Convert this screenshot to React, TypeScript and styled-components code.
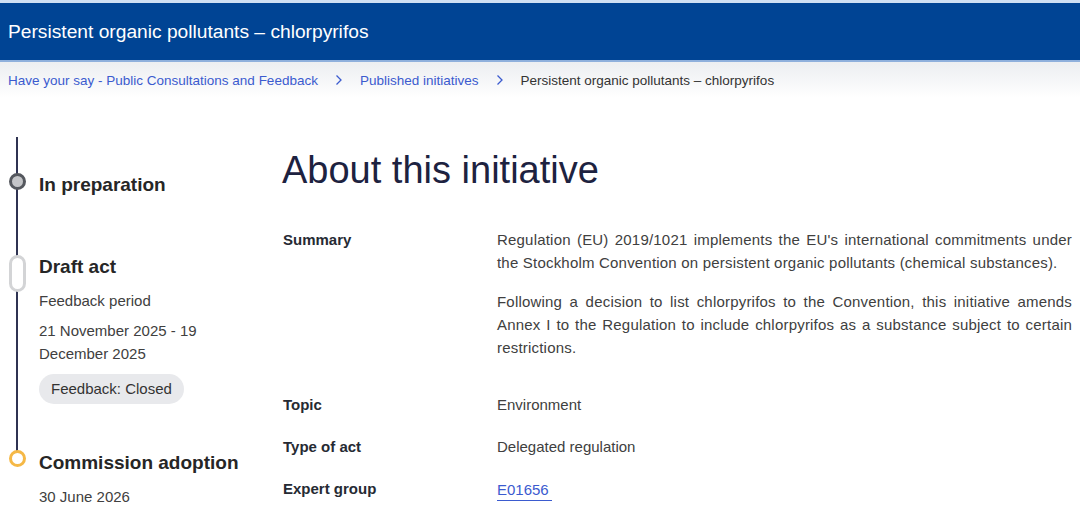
import React from "react";
import styled, { createGlobalStyle } from "styled-components";

const GlobalStyle = createGlobalStyle`
  html, body { margin: 0; padding: 0; background: #ffffff; }
  body { font-family: "Liberation Sans", Arial, sans-serif; color: #404040; }
  * { box-sizing: border-box; }
`;

const Page = styled.div`
  width: 1080px;
  height: 516px;
  overflow: hidden;
  background: #fff;
`;

const Header = styled.header`
  height: 62px;
  background: #004494;
  border-top: 3px solid #cfe0f3;
  border-bottom: 2px solid #8fb0dc;
  display: flex;
  align-items: center;
  padding: 0 8px 0;
`;

const HeaderTitle = styled.h1`
  margin: 0;
  font-size: 19.2px;
  font-weight: 400;
  color: #ffffff;
`;

const Breadcrumb = styled.nav`
  height: 36px;
  background: linear-gradient(#eceef1, #ffffff);
  display: flex;
  align-items: center;
  padding: 0 8px;
  font-size: 13.5px;
`;

const Crumb = styled.a<{ $current?: boolean }>`
  color: ${(p) => (p.$current ? "#333333" : "#3b5bcf")};
  text-decoration: none;
`;

const Sep = styled.span`
  display: inline-flex;
  align-items: center;
  margin: 0 17px 0 17px;
  color: #3b5bcf;
`;

const Main = styled.main`
  display: grid;
  grid-template-columns: 274px 1fr;
  padding: 0 8px;
`;

const Timeline = styled.ol`
  position: relative;
  list-style: none;
  margin: 39px 0 0;
  padding: 36px 0 0;
  height: 380px;

  &::before {
    content: "";
    position: absolute;
    left: 8px;
    top: 0;
    width: 2px;
    height: 318px;
    background: #2f3352;
  }
`;

const Step = styled.li<{ $gap: number }>`
  display: grid;
  grid-template-columns: 18px 1fr;
  column-gap: 13px;
  margin-top: ${(p) => p.$gap}px;
  position: relative;
`;

const Marker = styled.span<{ $kind: "done" | "current" | "future" }>`
  position: relative;
  z-index: 1;
  justify-self: center;
  background: #fff;
  ${(p) =>
    p.$kind === "done"
      ? `width: 17px; height: 17px; margin-top: 0px; border-radius: 50%; border: 3.5px solid #55585e; background: #c4c5c8;`
      : p.$kind === "current"
      ? `width: 17px; height: 37px; margin-top: 0px; border-radius: 9px; border: 3.5px solid #d3d4d6;`
      : `width: 17px; height: 17px; margin-top: -1px; border-radius: 50%; border: 3.5px solid #f5b846;`}
`;

const StepBody = styled.div`
  display: flex;
  flex-direction: column;
`;

const StepTitle = styled.h3`
  margin: 0;
  font-size: 19px;
  line-height: 24px;
  font-weight: 700;
  color: #262626;
`;

const StepText = styled.p<{ $mt: number }>`
  margin: ${(p) => p.$mt}px 0 0;
  font-size: 15px;
  line-height: 23px;
  color: #404040;
`;

const Tag = styled.span`
  align-self: flex-start;
  margin-top: 9px;
  height: 30px;
  padding: 0 12px;
  border-radius: 15px;
  background: #e8e9ec;
  font-size: 15px;
  line-height: 30px;
  color: #333;
`;

const Content = styled.section`
  display: flex;
  flex-direction: column;
`;

const PageTitle = styled.h2`
  margin: 49px 0 0;
  font-size: 38px;
  line-height: 46px;
  font-weight: 400;
  color: #1d2240;
`;

const Details = styled.dl`
  margin: 35px 0 0;
  display: flex;
  flex-direction: column;
  gap: 19px;
`;

const Row = styled.div<{ $extra?: number }>`
  display: grid;
  grid-template-columns: 215px 1fr;
  padding-bottom: ${(p) => p.$extra ?? 0}px;
`;

const Label = styled.dt`
  font-size: 15px;
  line-height: 23px;
  font-weight: 700;
  color: #262a33;
  padding-left: 1px;
`;

const Value = styled.dd`
  margin: 0;
  font-size: 15px;
  line-height: 23px;
  color: #404040;
  display: flex;
  flex-direction: column;
  gap: 16px;
`;

const Para = styled.p`
  margin: 0;
  text-align: justify;
  letter-spacing: 0.2px;
`;

const Link = styled.a`
  align-self: flex-start;
  color: #3b5bcf;
  text-decoration: none;
  border-bottom: 1px solid #3b5bcf;
  line-height: 21px;
  padding-right: 3px;
  margin-top: 2px;
`;

const Chevron = () => (
  <svg width="8" height="12" viewBox="0 0 8 12" fill="none">
    <path d="M1.5 1.5 L6 6 L1.5 10.5" stroke="currentColor" strokeWidth="1.3" />
  </svg>
);

export default function App() {
  return (
    <Page>
      <GlobalStyle />
      <Header>
        <HeaderTitle>Persistent organic pollutants – chlorpyrifos</HeaderTitle>
      </Header>
      <Breadcrumb>
        <Crumb href="#">Have your say - Public Consultations and Feedback</Crumb>
        <Sep>
          <Chevron />
        </Sep>
        <Crumb href="#">Published initiatives</Crumb>
        <Sep>
          <Chevron />
        </Sep>
        <Crumb $current>Persistent organic pollutants – chlorpyrifos</Crumb>
      </Breadcrumb>
      <Main>
        <Timeline>
          <Step $gap={0}>
            <Marker $kind="done" />
            <StepBody>
              <StepTitle>In preparation</StepTitle>
            </StepBody>
          </Step>
          <Step $gap={58}>
            <Marker $kind="current" />
            <StepBody>
              <StepTitle>Draft act</StepTitle>
              <StepText $mt={10}>Feedback period</StepText>
              <StepText $mt={7}>
                21 November 2025 - 19
                <br />
                December 2025
              </StepText>
              <Tag>Feedback: Closed</Tag>
            </StepBody>
          </Step>
          <Step $gap={47}>
            <Marker $kind="future" />
            <StepBody>
              <StepTitle>Commission adoption</StepTitle>
              <StepText $mt={10}>30 June 2026</StepText>
            </StepBody>
          </Step>
        </Timeline>
        <Content>
          <PageTitle>About this initiative</PageTitle>
          <Details>
            <Row $extra={15}>
              <Label>Summary</Label>
              <Value>
                <Para>
                  Regulation (EU) 2019/1021 implements the EU's international commitments under the
                  Stockholm Convention on persistent organic pollutants (chemical substances).
                </Para>
                <Para>
                  Following a decision to list chlorpyrifos to the Convention, this initiative amends
                  Annex I to the Regulation to include chlorpyrifos as a substance subject to certain
                  restrictions.
                </Para>
              </Value>
            </Row>
            <Row>
              <Label>Topic</Label>
              <Value>Environment</Value>
            </Row>
            <Row>
              <Label>Type of act</Label>
              <Value>Delegated regulation</Value>
            </Row>
            <Row>
              <Label>Expert group</Label>
              <Value>
                <Link href="#">E01656</Link>
              </Value>
            </Row>
          </Details>
        </Content>
      </Main>
    </Page>
  );
}
